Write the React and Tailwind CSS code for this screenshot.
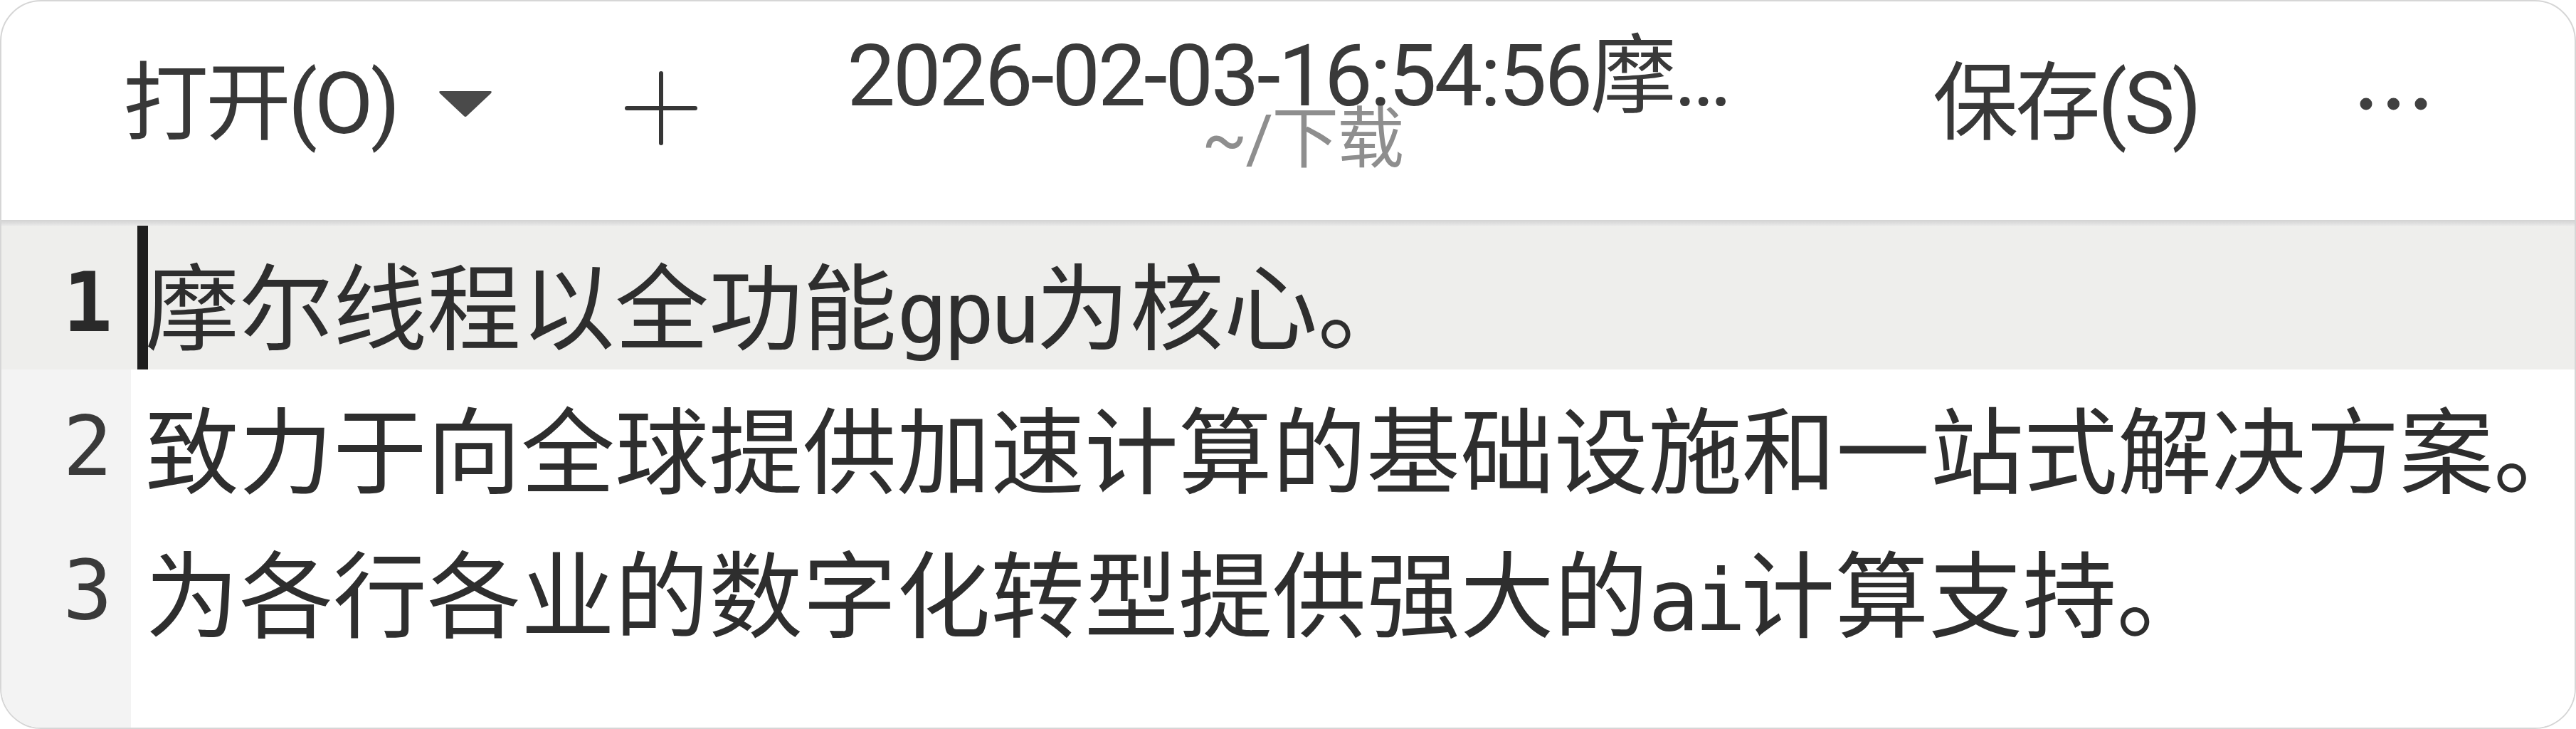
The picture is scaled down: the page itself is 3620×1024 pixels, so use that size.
import React from 'react'

// editor lines; latin runs are drawn in the mono face
const LINES = [
  ['摩尔线程以全功能', { mono: 'gpu' }, '为核心。'],
  ['致力于向全球提供加速计算的基础设施和一站式解决方案。'],
  ['为各行各业的数字化转型提供强大的', { mono: 'ai' }, '计算支持。'],
]

function DropArrow() {
  return (
    <svg width="76" height="40" viewBox="0 0 76 40" className="block">
      <path d="M3 2 H73 Q76 2 74 5 L40 37 Q38 39 36 37 L2 5 Q0 2 3 2 Z" fill="#4a4a4a" />
    </svg>
  )
}

function PlusIcon() {
  return (
    <svg width="102" height="104" viewBox="0 0 102 104" className="block">
      <g stroke="#363636" strokeWidth="6" strokeLinecap="round">
        <line x1="51" y1="3" x2="51" y2="101" />
        <line x1="3" y1="52" x2="99" y2="52" />
      </g>
    </svg>
  )
}

function MoreIcon() {
  return (
    <svg width="96" height="18" viewBox="0 0 96 18" className="block">
      <g fill="#404040">
        <circle cx="9" cy="9" r="8.5" />
        <circle cx="47.5" cy="9" r="8.5" />
        <circle cx="86" cy="9" r="8.5" />
      </g>
    </svg>
  )
}

// a trailing full stop only inks the left part of its cell, so trim its advance
function Run({ text }) {
  if (!text.endsWith('。')) return <span>{text}</span>
  return (
    <span>
      {text.slice(0, -1)}
      <span className="tracking-[-70px]">。</span>
    </span>
  )
}

function Line({ n, parts, current }) {
  return (
    <div className={`flex h-[202px] ${current ? 'bg-[#eeeeec]' : ''}`}>
      <div
        className={`w-[182px] shrink-0 flex justify-end pr-[26px] pt-[7px] text-[116px] leading-[202px] font-['DejaVu_Sans_Mono',monospace] ${
          current ? 'font-bold text-[#2a2a2a]' : 'bg-[#f3f3f3] text-[#3a3a3a]'
        }`}
      >
        {n}
      </div>
      <div
        className={`relative flex-1 pl-[20px] pt-[6px] whitespace-nowrap text-[132px] leading-[202px] text-[#2e2e2e] font-['Noto_Sans_CJK_SC',sans-serif] ${
          current ? '' : 'bg-white'
        }`}
      >
        {current && <div className="absolute left-[9px] top-0 h-full w-[15px] bg-[#1e1e1e]" />}
        {parts.map((p, i) =>
          typeof p === 'string' ? (
            <Run key={i} text={p} />
          ) : (
            <span key={i} className="font-['DejaVu_Sans_Mono',monospace] text-[120px] tracking-[-7px]">
              {p.mono}
            </span>
          )
        )}
      </div>
    </div>
  )
}

export default function App() {
  return (
    <div className="min-h-screen bg-white">
      <div className="h-[1024px] flex flex-col border-2 border-[#d6d6d6] rounded-[58px] overflow-hidden bg-white">
        {/* header bar */}
        <header className="h-[307px] shrink-0 grid grid-cols-[1fr_auto_1fr] items-center pb-[20px] text-[#383838] font-['Roboto','Noto_Sans_CJK_SC',sans-serif]">
          <div className="flex items-center pl-[171px]">
            <span className="text-[120px] leading-none tracking-[-4px]">打开(O)</span>
            <span className="ml-[58px]">
              <DropArrow />
            </span>
            <span className="ml-[186px] mt-[12px]">
              <PlusIcon />
            </span>
          </div>

          <div className="flex flex-col items-center">
            <div className="text-[121px] leading-[100px] tracking-[-3.5px] text-[#3a3a3a]">2026-02-03-16:54:56摩…</div>
            <div className="ml-[40px] text-[94px] leading-[78px] tracking-[-2px] text-[#8e8e8e]">~/下载</div>
          </div>

          <div className="flex items-center justify-end pr-[206px]">
            <span className="text-[120px] leading-none tracking-[-4px]">保存(S)</span>
            <span className="ml-[226px]">
              <MoreIcon />
            </span>
          </div>
        </header>

        <div className="h-[8px] shrink-0 bg-gradient-to-b from-[#d2d2d2] to-[#e8e8e8]" />

        {/* text view */}
        <main className="flex-1 flex flex-col">
          {LINES.map((parts, i) => (
            <Line key={i} n={i + 1} parts={parts} current={i === 0} />
          ))}
          <div className="flex flex-1">
            <div className="w-[182px] shrink-0 bg-[#f3f3f3]" />
            <div className="flex-1 bg-white" />
          </div>
        </main>
      </div>
    </div>
  )
}
